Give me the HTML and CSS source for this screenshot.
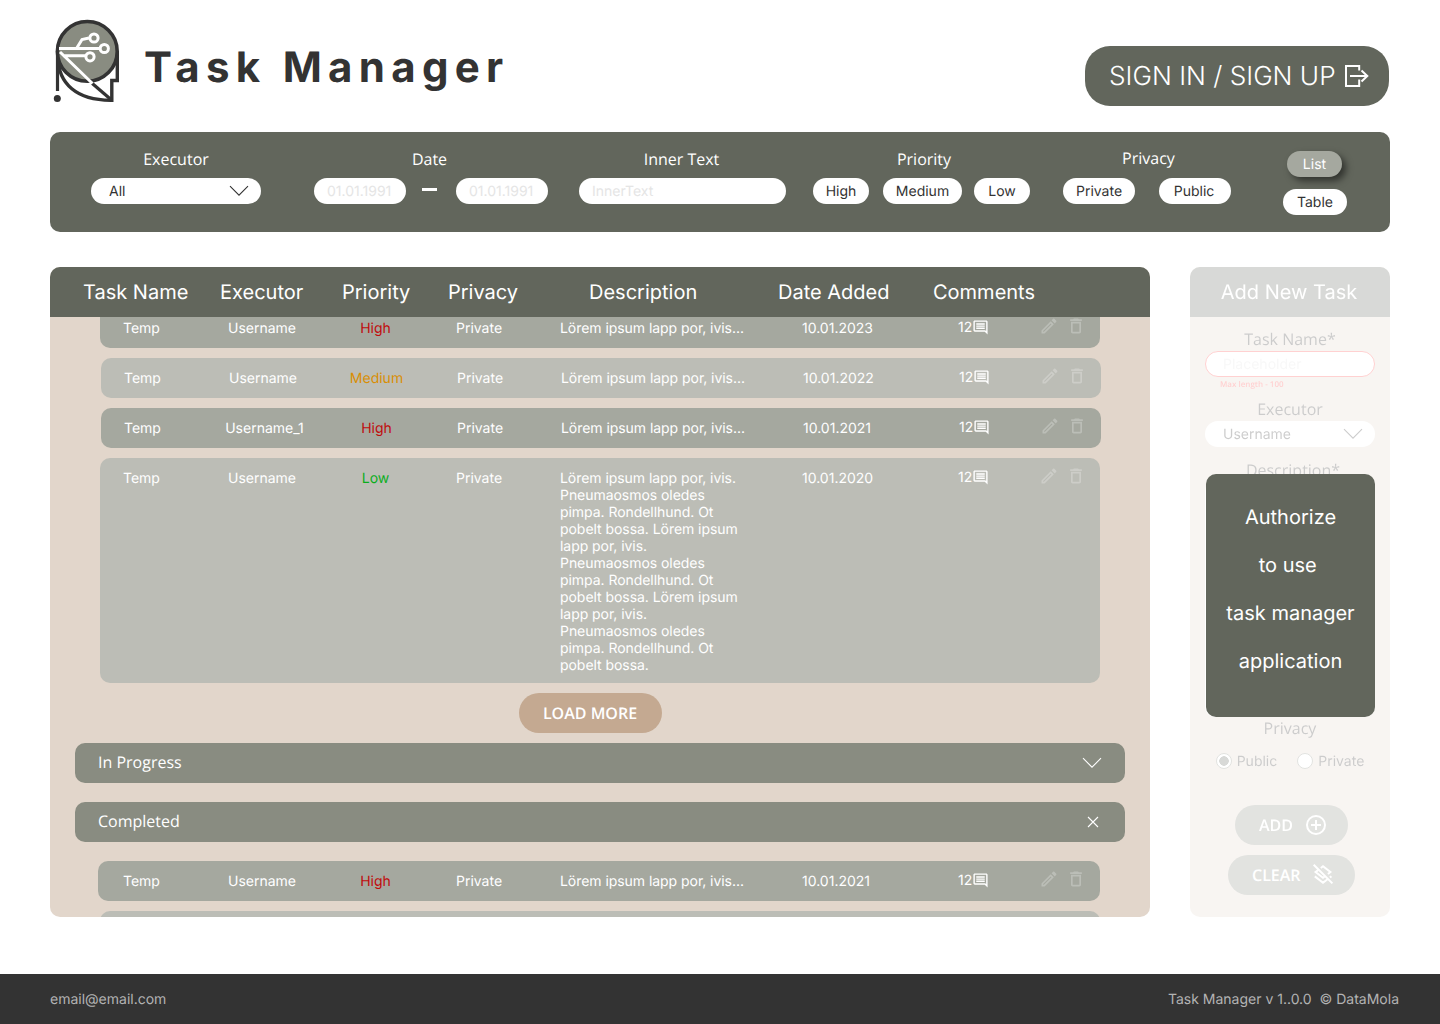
FILE: index.html
```html
<!DOCTYPE html>
<html lang="en">
<head>
<meta charset="utf-8">
<title>Task Manager</title>
<link rel="stylesheet" href="styles.css">
</head>
<body>
<svg class="defs" width="0" height="0">
  <symbol id="chevron" viewBox="0 0 20 12"><path d="M1 1.2 10 10.2 19 1.2" fill="none" stroke="currentColor" stroke-width="1.1"/></symbol>
  <symbol id="comment" viewBox="0 0 24 24"><path fill="currentColor" d="M22 4c0-1.1-.9-2-2-2H4c-1.1 0-2 .9-2 2v12c0 1.1.9 2 2 2h14l4 4V4zm-2 0v13.17L18.83 16H4V4h16zM6 12h12v2H6zm0-3h12v2H6zm0-3h12v2H6z"/></symbol>
  <symbol id="edit" viewBox="0 0 24 24"><path fill="currentColor" d="M14.06 9.02l.92.92L5.92 19H5v-.92l9.06-9.06M17.66 3c-.25 0-.51.1-.7.29l-1.83 1.83 3.75 3.75 1.83-1.83c.39-.39.39-1.02 0-1.41l-2.34-2.34c-.2-.2-.45-.29-.71-.29zm-3.6 3.19L3 17.25V21h3.75L17.81 9.94l-3.75-3.75z"/></symbol>
  <symbol id="trash" viewBox="0 0 24 24"><path fill="currentColor" d="M6 19c0 1.1.9 2 2 2h8c1.1 0 2-.9 2-2V7H6v12zM8 9h8v10H8V9zm7.5-5l-1-1h-5l-1 1H5v2h14V4z"/></symbol>
</svg>

<header class="header">
  <svg class="logo" width="68" height="84" viewBox="13 9 68 84" fill="none">
    <path d="M17.8 46C18 74 37 90.6 71.8 90.2V70.5H77.3V42" stroke="#333" stroke-width="3.4"/>
    <circle cx="47.3" cy="41.4" r="29.9" fill="#898c81" stroke="#333" stroke-width="3.6"/>
    <path d="M17.5 41V81" stroke="#333" stroke-width="3.2"/>
    <circle cx="17.3" cy="88.5" r="3.5" fill="#333"/>
    <path d="M52 73.3 71.5 90" stroke="#333" stroke-width="3.2"/>
    <g stroke="#fff" stroke-width="3">
      <path d="M19 38.5H59M36.5 38.5 42 29.5 49 28M20 42 52.5 73.5M23 45.8H45"/>
      <circle cx="54" cy="28" r="4.1"/>
      <circle cx="64.3" cy="38.5" r="4.1"/>
      <circle cx="50" cy="46.8" r="4.1"/>
    </g>
  </svg>
  <h1 class="title">Task Manager</h1>
  <button class="sign">
    <span>SIGN IN / SIGN UP</span>
    <svg width="24" height="24" viewBox="0 0 24 24" fill="none" stroke="#fff" stroke-width="2"><path d="M14.2 6.5V2H1v20h13.2v-6.5M5 12h17M16.5 6.5 22.3 12l-5.8 5.5"/></svg>
  </button>
</header>

<section class="filters">
  <div class="group executor">
    <span class="label">Executor</span>
    <div class="pill select"><span>All</span><svg width="20" height="12"><use href="#chevron"/></svg></div>
  </div>
  <div class="group date">
    <span class="label">Date</span>
    <div class="options"><span class="pill hint">01.01.1991</span><i class="dash"></i><span class="pill hint">01.01.1991</span></div>
  </div>
  <div class="group inner">
    <span class="label">Inner Text</span>
    <div class="pill hint">InnerText</div>
  </div>
  <div class="group priority">
    <span class="label">Priority</span>
    <div class="options"><span class="pill">High</span><span class="pill medium">Medium</span><span class="pill">Low</span></div>
  </div>
  <div class="group privacy">
    <span class="label">Privacy</span>
    <div class="options"><span class="pill">Private</span><span class="pill">Public</span></div>
  </div>
  <div class="view"><span class="pill active">List</span><span class="pill">Table</span></div>
</section>

<main class="main">
  <section class="board">
    <div class="board-head"><span>Task Name</span><span>Executor</span><span>Priority</span><span>Privacy</span><span>Description</span><span>Date Added</span><span>Comments</span></div>
    <div class="board-body">
      <div class="task">
        <span>Temp</span><span class="mid">Username</span><span class="mid high">High</span><span class="mid">Private</span><span class="desc">Lörem ipsum lapp por, ivis...</span><span>10.01.2023</span>
        <span class="comments">12<svg width="17" height="17"><use href="#comment"/></svg></span><span class="actions"><svg width="20" height="20"><use href="#edit"/></svg><svg width="20" height="20"><use href="#trash"/></svg></span>
      </div>
      <div class="task pale inset">
        <span>Temp</span><span class="mid">Username</span><span class="mid medium-text">Medium</span><span class="mid">Private</span><span class="desc">Lörem ipsum lapp por, ivis...</span><span>10.01.2022</span>
        <span class="comments">12<svg width="17" height="17"><use href="#comment"/></svg></span><span class="actions"><svg width="20" height="20"><use href="#edit"/></svg><svg width="20" height="20"><use href="#trash"/></svg></span>
      </div>
      <div class="task inset">
        <span>Temp</span><span class="mid shifted">Username_1</span><span class="mid high">High</span><span class="mid">Private</span><span class="desc">Lörem ipsum lapp por, ivis...</span><span>10.01.2021</span>
        <span class="comments">12<svg width="17" height="17"><use href="#comment"/></svg></span><span class="actions"><svg width="20" height="20"><use href="#edit"/></svg><svg width="20" height="20"><use href="#trash"/></svg></span>
      </div>
      <div class="task pale open">
        <span>Temp</span><span class="mid">Username</span><span class="mid low">Low</span><span class="mid">Private</span>
        <span class="desc">Lörem ipsum lapp por, ivis.<br>Pneumaosmos oledes<br>pimpa. Rondellhund. Ot<br>pobelt bossa. Lörem ipsum<br>lapp por, ivis.<br>Pneumaosmos oledes<br>pimpa. Rondellhund. Ot<br>pobelt bossa. Lörem ipsum<br>lapp por, ivis.<br>Pneumaosmos oledes<br>pimpa. Rondellhund. Ot<br>pobelt bossa.</span><span>10.01.2020</span>
        <span class="comments">12<svg width="17" height="17"><use href="#comment"/></svg></span><span class="actions"><svg width="20" height="20"><use href="#edit"/></svg><svg width="20" height="20"><use href="#trash"/></svg></span>
      </div>
      <button class="load">LOAD MORE</button>
      <div class="status"><span>In Progress</span><svg width="20" height="12"><use href="#chevron"/></svg></div>
      <div class="status completed"><span>Completed</span><svg class="cross" width="12" height="12" viewBox="0 0 12 12"><path d="M1 1 11 11M11 1 1 11" stroke="#fff" stroke-width="1.1"/></svg></div>
      <div class="task wide">
        <span>Temp</span><span class="mid">Username</span><span class="mid high">High</span><span class="mid">Private</span><span class="desc">Lörem ipsum lapp por, ivis...</span><span>10.01.2021</span>
        <span class="comments">12<svg width="17" height="17"><use href="#comment"/></svg></span><span class="actions"><svg width="20" height="20"><use href="#edit"/></svg><svg width="20" height="20"><use href="#trash"/></svg></span>
      </div>
      <div class="task pale"></div>
    </div>
  </section>

  <aside class="side">
    <form class="panel">
      <h2 class="panel-head">Add New Task</h2>
      <div class="panel-body">
        <span class="label">Task Name*</span>
        <div class="field invalid">Placeholder</div>
        <span class="error">Max length - 100</span>
        <span class="label">Executor</span>
        <div class="field select"><span>Username</span><svg width="20" height="12"><use href="#chevron"/></svg></div>
        <span class="label desc-label">Description*</span>
        <div class="area"></div>
        <span class="label">Privacy</span>
        <div class="radios"><span class="radio"><i class="dot on"></i><span>Public</span></span><span class="radio"><i class="dot"></i><span>Private</span></span></div>
        <span class="btn add">ADD<svg width="24" height="24" viewBox="0 0 24 24" fill="none" stroke="#fff" stroke-width="2"><circle cx="12" cy="12" r="9"/><path d="M12 7v10M7 12h10"/></svg></span>
        <span class="btn clear">CLEAR<svg width="24" height="24" viewBox="0 0 24 24" fill="none" stroke="#fff" stroke-width="2"><path d="M2.7 1.7 21.4 20.4M9.8 5 12 3.3 19.4 9l-2.5 2M6.8 7.4 4.6 9 12 14.7l1.4-1M3.8 13.4 12 19.8l4.2-3.3M18.9 13.1l1.5 1.5"/></svg></span>
      </div>
    </form>
    <div class="notice">Authorize<br>to use&nbsp;<br>task manager<br>application</div>
  </aside>
</main>

<footer class="footer"><span>email@email.com</span><span class="version">Task Manager v 1..0.0 &nbsp;© DataMola</span></footer>
</body>
</html>
```
FILE: styles.css
```css
* { box-sizing: border-box; }
body {
  margin: 0;
  height: 1024px;
  display: flex;
  flex-direction: column;
  background: #fff;
  color: #333;
  font: 14px/17px Inter, sans-serif;
  text-rendering: geometricPrecision;
  overflow: hidden;
}
svg { flex: none; display: block; }
.defs { position: absolute; }
button { border: 0; color: #fff; text-rendering: inherit; }

.header { display: flex; height: 132px; padding: 19px 51px 0 53px; }
.title { margin: 18px 0 0 23px; font-size: 42px; line-height: 62px; font-weight: 700; letter-spacing: 6.3px; }
.sign {
  display: flex; align-items: center; justify-content: space-between;
  width: 304px; height: 60px; margin: 27px 0 0 auto; padding: 0 20px 0 24px;
  border-radius: 25px; background: #62665c;
  font: 300 26.2px/32px Inter, sans-serif; white-space: nowrap;
}
.sign span { padding-top: 1px; }

.label { font: 16px/22px "Open Sans", sans-serif; text-align: center; }
.filters {
  display: flex; height: 100px; margin: 0 50px; padding: 16px 43px 0 41px;
  border-radius: 10px; background: #62665c;
}
.group { display: flex; flex-direction: column; gap: 8px; }
.group .label { color: #fff; }
.options { display: flex; justify-content: space-between; }
.pill {
  display: flex; align-items: center; justify-content: center;
  height: 26px; padding: 0 13px; border-radius: 13px; background: #fff; white-space: nowrap;
}
.hint { color: #e5e5e5; justify-content: flex-start; }
.executor { width: 170px; }
.select { justify-content: space-between; padding: 0 12px 0 18px; }
.date { width: 234px; margin-left: 53px; }
.date .label { padding-right: 3px; }
.date .pill { width: 92px; }
.dash { width: 15px; height: 3px; margin: 10px 3px 0 0; background: #fff; }
.inner { width: 207px; margin-left: 31px; }
.inner .label { padding-right: 2px; }
.priority { width: 217px; margin-left: 27px; }
.priority .label { padding-left: 5px; }
.priority .pill { width: 56px; }
.priority .medium { width: 79px; margin-left: 2px; }
.privacy { width: 168px; margin: -1px 0 0 33px; gap: 9px; }
.privacy .label { padding-left: 3px; }
.privacy .pill { width: 72px; }
.privacy .pill:last-child { padding-right: 15px; }
.view { display: flex; flex-direction: column; align-items: center; gap: 12px; width: 64px; margin: 3px 0 0 52px; }
.view .pill { width: 64px; }
.view .active { width: 55px; margin-right: 1px; background: #a5a89f; color: #fff; box-shadow: 4px 4px 7px rgba(0, 0, 0, .5); }

.main { display: flex; gap: 40px; height: 650px; margin: 35px 50px 0; }
.board { width: 1100px; display: flex; flex-direction: column; border-radius: 10px; background: #e2d6cb; overflow: hidden; }
.board-head {
  display: grid; grid-template-columns: 137px 122px 106px 141px 189px 155px auto;
  align-items: center; flex: none; height: 50px; padding-left: 33px;
  background: #62665c; color: #fff; font-size: 20px; line-height: 24px;
}
.board-body { display: flex; flex-direction: column; gap: 10px; padding: 0 50px; margin-top: -9px; clip-path: inset(9px 0 0 0); }
.task {
  display: grid; grid-template-columns: 80px 118px 109px 98px 274px 156px 81px auto;
  flex: none; height: 40px; padding: 12px 0 0 23px; border-radius: 10px;
  background: #a5a89f; color: #fff; white-space: nowrap;
}
.pale { background: #bcbdb6; }
.inset { margin: 0 -1px 0 1px; }
.open { height: 225px; }
.wide { margin-left: -2px; padding-left: 25px; margin-top: 9px; }
.mid { text-align: center; }
.shifted { padding-left: 3px; }
.desc { padding-left: 32px; letter-spacing: -.05px; }
.high { color: #c00d0d; }
.medium-text { color: #d98e04; }
.low { color: #0aae1c; }
.comments { display: flex; margin-top: -1px; }
.actions { display: flex; gap: 7px; margin: -4px 0 0 0; opacity: .25; }
.load { align-self: center; width: 143px; height: 40px; margin-right: 19px; padding: 0 7px 0 6px; border-radius: 20px; background: #c4a991; font: 600 16px/22px "Open Sans", sans-serif; }
.status {
  display: flex; align-items: center; justify-content: space-between; flex: none;
  height: 40px; margin: 0 -25px; padding: 0 23px; border-radius: 10px;
  background: #898c81; color: #fff; font: 16px/22px "Open Sans", sans-serif;
}
.status span { margin-top: -2px; }
.completed { margin-top: 9px; }
.cross { margin-right: 3.5px; }

.side { position: relative; width: 200px; }
.panel { height: 650px; border-radius: 10px; background: #e2d6cb; overflow: hidden; opacity: .25; }
.panel-head { margin: 0; height: 50px; padding-right: 2px; background: #62665c; color: #fff; font: 400 20px/50px Inter, sans-serif; text-align: center; }
.panel-body { display: flex; flex-direction: column; align-items: center; padding-top: 11px; }
.field { display: flex; align-items: center; width: 170px; height: 26px; margin-top: 1px; padding: 0 12px 0 18px; border-radius: 13px; background: #fff; }
.invalid { border: 1px solid #f44; padding-left: 17px; color: #e0e0e0; }
.error { align-self: flex-start; margin-left: 30px; height: 21px; color: #f44; font: 600 8px/15px "Open Sans", sans-serif; }
.panel .select { justify-content: space-between; }
.desc-label { margin: 12px 0 0 6px; }
.area { width: 170px; height: 236px; border-radius: 10px; background: #fff; }
.radios { display: flex; gap: 20px; margin-top: 13px; }
.radio { display: flex; align-items: center; gap: 5px; height: 17px; }
.radio span { padding-top: 1px; }
.dot { width: 16px; height: 16px; border: 1px solid #898c81; border-radius: 50%; background: #fff; }
.on { background: radial-gradient(circle, #62665c 4.5px, #fff 5px); }
.btn { display: flex; align-items: center; justify-content: space-between; height: 40px; border-radius: 20px; background: #898c81; color: #fff; font: 600 16px/22px "Open Sans", sans-serif; }
.add { width: 113px; margin: 36px 0 10px 3px; padding: 0 20px 0 24px; }
.clear { width: 127px; margin-left: 3px; padding: 0 20px 0 24px; }
.notice {
  position: absolute; left: 16px; top: 207px; width: 169px; height: 243px; padding-top: 19px;
  border-radius: 10px; background: #62665c; color: #fff; text-align: center;
  font-size: 20px; line-height: 48px;
}

.footer { display: flex; justify-content: space-between; align-items: center; height: 50px; margin-top: auto; padding: 1px 41px 0 50px; background: #333; color: #b3b3b3; }
```
